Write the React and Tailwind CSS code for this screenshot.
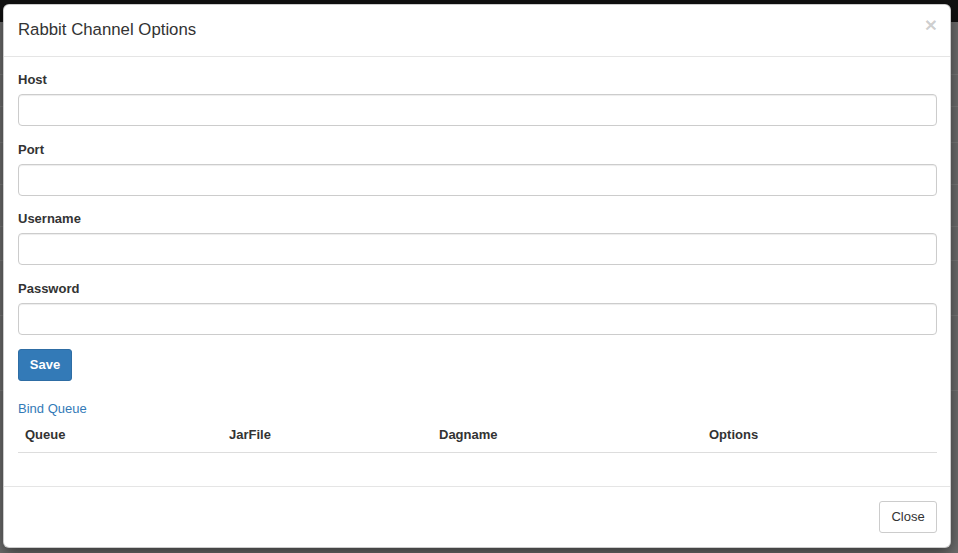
import React from "react";

function Field({ label }) {
  return (
    <div className="mb-[14.5px]">
      <label className="block text-[13px] font-bold leading-[18.5px] text-[#333] mb-[4.5px]">{label}</label>
      <input
        type="text"
        className="block w-full h-[32px] rounded-[4px] border border-[#ccc] bg-white px-3 text-[13px] shadow-[inset_0_1px_1px_rgba(0,0,0,0.075)] outline-none"
      />
    </div>
  );
}

export default function App() {
  return (
    <div
      className="relative h-[553px] w-full overflow-hidden bg-[#6e6e6e]"
      style={{ fontFamily: '"Liberation Sans", Arial, Helvetica, sans-serif' }}
    >
      <div className="h-[22px] bg-[#111111]" />
      <div className="flex flex-col">
        <div className="h-[53px] border-b border-[#7a7a7a]" />
        <div className="h-[32px] border-b border-[#7a7a7a]" />
        <div className="h-[36px] border-b border-[#7a7a7a]" />
        <div className="h-[42px] border-b border-[#7a7a7a]" />
        <div className="h-[42px] border-b border-[#7a7a7a]" />
        <div className="h-[34px] border-b border-[#7a7a7a]" />
        <div className="h-[55px] border-b border-[#7a7a7a]" />
        <div className="h-[75px] border-b border-[#7a7a7a]" />
      </div>

      <div className="absolute left-[3px] top-[4px] w-[948px] rounded-[6px] border border-[rgba(0,0,0,0.2)] bg-white shadow-[0_5px_15px_rgba(0,0,0,0.5)] text-[#333]">
        <div className="flex h-[52px] items-center justify-between border-b border-[#e5e5e5] pl-[14px] pr-[13px] pb-[2px]">
          <h4 className="text-[16.8px] leading-[24px] text-[#333]">Rabbit Channel Options</h4>
          <button className="mb-[10px] text-[21px] font-bold leading-none text-[rgba(0,0,0,0.2)]">×</button>
        </div>

        <div className="pl-[14px] pr-[13px] pt-[14px] pb-[15px]">
          <Field label="Host" />
          <Field label="Port" />
          <Field label="Username" />
          <Field label="Password" />
          <button className="h-[32px] w-[54px] rounded-[3px] border border-[#2e6da4] bg-[#337ab7] text-[13px] font-bold text-white">
            Save
          </button>
          <div className="mt-[19px] text-[13px] leading-[18px] text-[#337ab7]">Bind Queue</div>
          <div className="grid h-[35px] grid-cols-[204px_210px_270px_1fr] items-center border-b border-[#ddd] text-[13px] font-bold">
            <div className="px-[7px]">Queue</div>
            <div className="px-[7px]">JarFile</div>
            <div className="px-[7px]">Dagname</div>
            <div className="px-[7px]">Options</div>
          </div>
          <div className="h-[18px]" />
        </div>

        <div className="flex justify-end border-t border-[#e5e5e5] pl-[14px] pr-[13px] py-[14px]">
          <button className="h-[32px] w-[58px] rounded-[3px] border border-[#ccc] bg-white text-[13px] text-[#333]">
            Close
          </button>
        </div>
      </div>
    </div>
  );
}
